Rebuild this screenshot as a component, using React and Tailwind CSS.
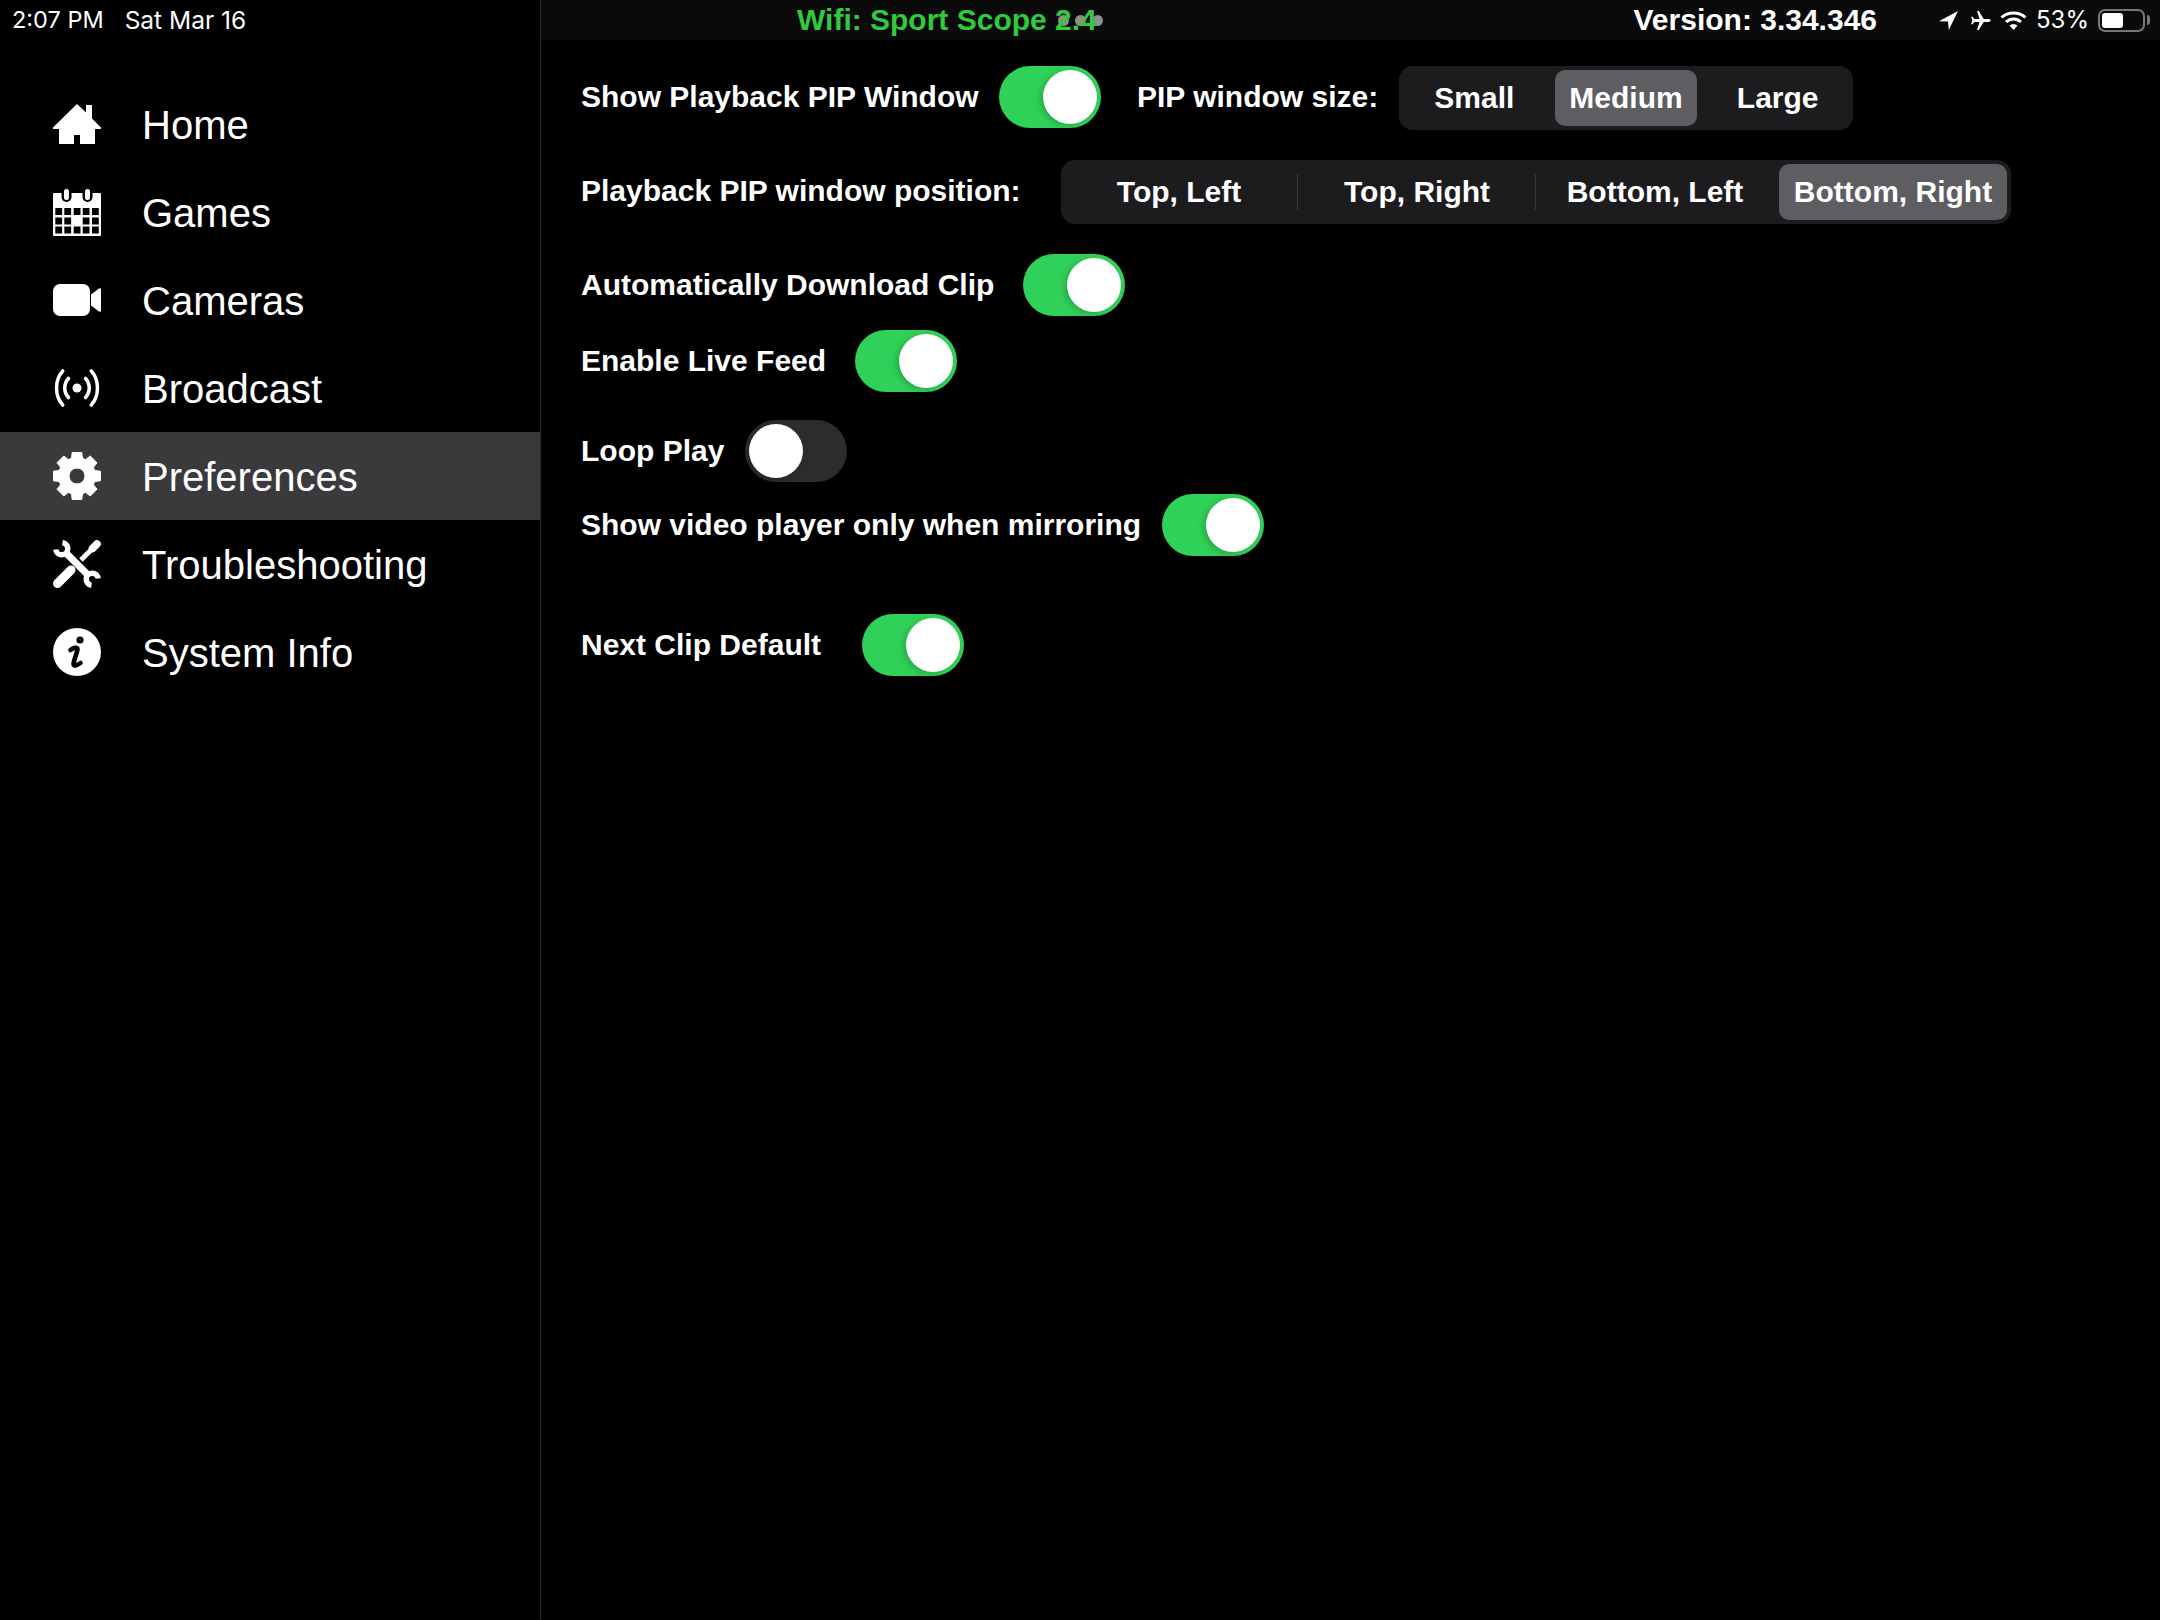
// 8 tooth gear, 48 box
const gearPath = () => {
  let d = "";
  for (let i = 0; i < 8; i++) {
    const a = (i * Math.PI) / 4 - Math.PI / 2;
    const pts = [
      [18.6, a - 0.3],
      [24, a - 0.2],
      [24, a + 0.2],
      [18.6, a + 0.3],
    ];
    pts.forEach(([r, t], j) => {
      const x = (24 + r * Math.cos(t)).toFixed(2);
      const y = (24 + r * Math.sin(t)).toFixed(2);
      d += `${i === 0 && j === 0 ? "M" : "L"}${x} ${y}`;
    });
  }
  return d + "Z M24 16a8 8 0 1 0 0 16a8 8 0 1 0 0-16Z";
};

const HomeIcon = () => (
  <svg width="48" height="48" viewBox="0 0 48 48" fill="white">
    <path fillRule="evenodd" d="M24 4L33 12.5V5H39V18.5L48 27.5V29H42V44H27V35H21V44H6V29H0V27.5Z" />
  </svg>
);

const CalendarIcon = () => {
  const xs = [2.3, 11.3, 20.7, 29.7, 39];
  const ys = [20, 29.5, 38.5];
  return (
    <svg width="48" height="48" viewBox="0 0 48 48">
      <rect x="0" y="5" width="48" height="43" rx="1" fill="white" />
      <rect x="8.5" y="0" width="10" height="14" rx="5" fill="black" />
      <rect x="29.5" y="0" width="10" height="14" rx="5" fill="black" />
      <rect x="11" y="1" width="5" height="11" rx="2.5" fill="white" />
      <rect x="32" y="1" width="5" height="11" rx="2.5" fill="white" />
      {ys.map((y, r) =>
        xs.map((x, c) =>
          r === 1 && c === 2 ? null : <rect key={`${r}${c}`} x={x} y={y} width="6.8" height="7" fill="black" />
        )
      )}
    </svg>
  );
};

const CameraIcon = () => (
  <svg width="48" height="48" viewBox="0 0 48 48" fill="white">
    <rect x="0" y="8" width="37" height="32" rx="7" />
    <path d="M38 18.5L46 12.5C47 11.8 48 12.3 48 13.5V34.5C48 35.7 47 36.2 46 35.5L38 29.5Z" />
  </svg>
);

const BroadcastIcon = () => (
  <svg width="48" height="48" viewBox="0 0 48 48" fill="none" stroke="white" strokeLinecap="round">
    <circle cx="24" cy="24" r="4.5" fill="white" stroke="none" />
    <path strokeWidth="3.6" d="M15.5 14.5C10.5 20 10.5 28 15.5 33.5M32.5 14.5C37.5 20 37.5 28 32.5 33.5" />
    <path strokeWidth="3.8" d="M8.5 7C-0.5 16 -0.5 32 8.5 41M39.5 7C48.5 16 48.5 32 39.5 41" transform="translate(24 24) scale(0.92 1) translate(-24 -24)" />
  </svg>
);

const GearIcon = () => (
  <svg width="48" height="48" viewBox="0 0 48 48">
    <path fill="white" fillRule="evenodd" stroke="white" strokeWidth="1" strokeLinejoin="round" d={gearPath()} />
  </svg>
);

const ToolsIcon = () => (
  <svg width="48" height="48" viewBox="0 0 48 48" fill="none" stroke="white">
    <path strokeWidth="9" strokeLinecap="round" d="M4.5 43.5L18 30" />
    <path strokeWidth="5" d="M28 20L40 8" />
    <path strokeWidth="7.5" strokeLinecap="round" d="M39.5 8.5L44 4" />
    <path strokeWidth="7" d="M12 12L36 36" />
    <path strokeWidth="5.5" d="M9.5 2.8A6 6 0 1 1 2.8 9.5" />
    <path strokeWidth="5.5" d="M38.5 45.2A6 6 0 1 1 45.2 38.5" />
  </svg>
);

const InfoIcon = () => (
  <svg width="48" height="48" viewBox="0 0 48 48">
    <circle cx="24" cy="24" r="24" fill="white" />
    <circle cx="27" cy="12" r="3.6" fill="black" />
    <path fill="none" stroke="black" strokeWidth="4.6" strokeLinecap="round" strokeLinejoin="round" d="M17.5 22C20 20 24.5 18.5 24.5 21C24.5 24 20.5 33 20.5 36C20.5 38.5 24 37.5 27.5 35" />
  </svg>
);

const navItems = [
  { label: "Home", Icon: HomeIcon },
  { label: "Games", Icon: CalendarIcon },
  { label: "Cameras", Icon: CameraIcon },
  { label: "Broadcast", Icon: BroadcastIcon },
  { label: "Preferences", Icon: GearIcon, active: true },
  { label: "Troubleshooting", Icon: ToolsIcon },
  { label: "System Info", Icon: InfoIcon },
];

function Toggle({ on = true }) {
  return (
    <div className={`w-[102px] h-[62px] rounded-full shrink-0 flex items-center px-[4px] ${on ? "bg-[#30d158] justify-end" : "bg-[#2c2c2e] justify-start"}`}>
      <div className="w-[54px] h-[54px] rounded-full bg-white shadow-[-3px_2px_6px_rgba(0,0,0,0.18)]" />
    </div>
  );
}

function Label({ children, className = "" }) {
  return <div className={`text-[30px] leading-none font-bold text-white shrink-0 whitespace-nowrap ${className}`}>{children}</div>;
}

function Segmented({ items, active, className = "" }) {
  return (
    <div className={`h-[64px] rounded-[14px] bg-[#1c1c1e] p-[4px] grid ${className}`}>
      {items.map((item, i) => (
        <div key={item} className="relative flex items-center justify-center">
          <div className={`w-full h-full pb-[2px] rounded-[10px] flex items-center justify-center text-[30px] font-bold text-white ${i === active ? "bg-[#5e5e62]" : ""}`}>
            {item}
          </div>
          {i < items.length - 1 && i !== active && i !== active - 1 && (
            <div className="absolute right-[-5px] top-[10px] w-px h-[36px] bg-[#3a3a3c]" />
          )}
        </div>
      ))}
    </div>
  );
}

function StatusIcons() {
  return (
    <div className="flex items-center">
      <svg width="19" height="19" viewBox="0 0 19 19" fill="white" className="ml-[62px]">
        <path d="M19 0L0 10.2L9 10.5L9.8 19Z" />
      </svg>
      <svg width="21" height="19" viewBox="0 0 21 19" fill="white" className="ml-[12px]">
        <path d="M20.5 9.5c0-.9-1-1.4-2-1.4h-4.8L8.8 0H7l2.5 8.1H4.4L2.6 5.8H1.2l1 3.7-1 3.7h1.4l1.8-2.3h5.1L7 19h1.8l4.9-8.1h4.8c1 0 2-.5 2-1.4z" />
      </svg>
      <svg width="27" height="19" viewBox="0 0 27 19" fill="none" stroke="white" strokeWidth="3" className="ml-[9px]">
        <path d="M1.5 6.5C8 .5 19 .5 25.5 6.5" />
        <path d="M6 11C10.5 7 16.5 7 21 11" />
        <path d="M13.5 19L9.5 14.5C12 12.5 15 12.5 17.5 14.5Z" fill="white" stroke="none" />
      </svg>
      <span className="ml-[9px] text-[24px] text-white font-['Inter']">53%</span>
      <div className="ml-[9px] w-[47px] h-[23px] rounded-[7px] border-2 border-[#77777a] p-[2px]">
        <div className="w-[21px] h-full rounded-[3px] bg-white" />
      </div>
      <div className="ml-[2px] w-[3px] h-[10px] rounded-r-full bg-[#77777a]" />
    </div>
  );
}

export default function App() {
  return (
    <div className="relative w-[2160px] h-[1620px] bg-black flex font-['Liberation_Sans',sans-serif] overflow-hidden">
      <aside className="w-[541px] h-full shrink-0 border-r border-[#2a2a2c]">
        <div className="h-10 pl-[12px] flex items-center text-[23.5px] text-white font-['Inter']">
          <span>2:07 PM</span>
          <span className="ml-[21px] text-[24.5px]">Sat Mar 16</span>
        </div>
        <nav className="mt-10">
          {navItems.map(({ label, Icon, active }) => (
            <div key={label} className={`h-[88px] pl-[53px] flex items-center ${active ? "bg-[#3a3a3c]" : ""}`}>
              <Icon />
              <span className="ml-[41px] pt-[1px] text-[40px] text-white">{label}</span>
            </div>
          ))}
        </nav>
      </aside>

      <main className="flex-1 min-w-0">
        <header className="relative h-10 bg-[#0a0a0b] flex items-center">
          {/* multitasking dots, the wifi text runs over them */}
          <div className="absolute top-[15px] left-[517px] flex gap-[6px]">
            <div className="w-[11px] h-[11px] rounded-full bg-[#8e8e8e]" />
            <div className="w-[11px] h-[11px] rounded-full bg-[#8e8e8e]" />
            <div className="w-[11px] h-[11px] rounded-full bg-[#8e8e8e]" />
          </div>
          <span className="relative ml-[256px] pb-[2px] text-[30px] font-bold text-[#2fcb3d]">Wifi: Sport Scope 2.4</span>
          <span className="ml-auto pb-[2px] text-[30px] font-bold text-white">Version: 3.34.346</span>
          <StatusIcons />
          <div className="w-[10px]" />
        </header>

        <div className="pl-[40px] pt-[26px] flex flex-col">
          <div className="flex items-center h-[62px]">
            <Label className="w-[418px]">Show Playback PIP Window</Label>
            <Toggle />
            <Label className="ml-[36px] w-[262px]">PIP window size:</Label>
            <Segmented items={["Small", "Medium", "Large"]} active={1} className="w-[454px] mt-[2px] grid-cols-3 gap-[9px]" />
          </div>
          <div className="flex items-center h-[64px] mt-[32px]">
            <Label className="w-[480px] pb-[2px]">Playback PIP window position:</Label>
            <Segmented items={["Top, Left", "Top, Right", "Bottom, Left", "Bottom, Right"]} active={3} className="w-[950px] grid-cols-4 gap-[10px]" />
          </div>
          <div className="flex items-center mt-[30px]">
            <Label className="w-[442px]">Automatically Download Clip</Label>
            <Toggle />
          </div>
          <div className="flex items-center mt-[14px]">
            <Label className="w-[274px]">Enable Live Feed</Label>
            <Toggle />
          </div>
          <div className="flex items-center mt-[28px]">
            <Label className="w-[164px]">Loop Play</Label>
            <Toggle on={false} />
          </div>
          <div className="flex items-center mt-[12px]">
            <Label className="w-[581px]">Show video player only when mirroring</Label>
            <Toggle />
          </div>
          <div className="flex items-center mt-[58px]">
            <Label className="w-[281px]">Next Clip Default</Label>
            <Toggle />
          </div>
        </div>
      </main>
    </div>
  );
}
